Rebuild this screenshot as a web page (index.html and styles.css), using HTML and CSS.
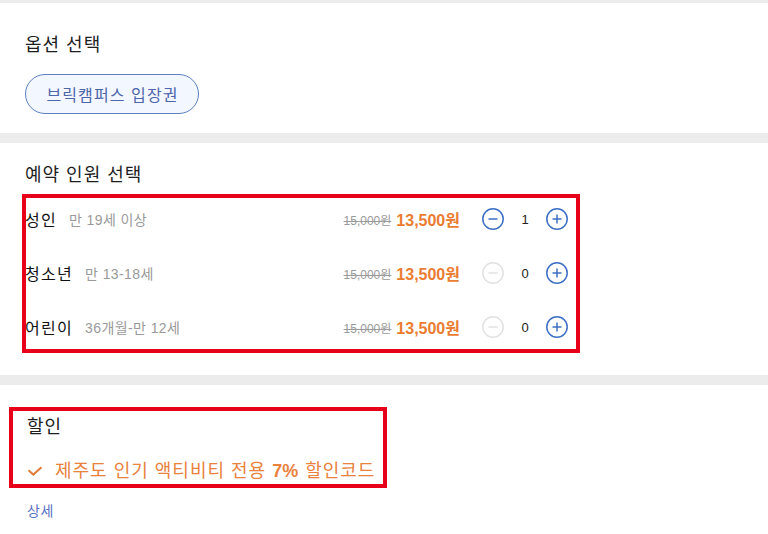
FILE: index.html
```html
<!DOCTYPE html>
<html lang="ko">
<head>
<meta charset="utf-8">
<link rel="stylesheet" href="styles.css">
</head>
<body>
<div class="gap-top"></div>
<section class="section option">
  <h2 class="title">옵션 선택</h2>
  <button class="chip">브릭캠퍼스 입장권</button>
</section>
<div class="divider"></div>
<section class="section people">
  <h2 class="title">예약 인원 선택</h2>
  <div class="rows">
    <div class="row">
      <div class="label"><span class="name">성인</span><span class="desc">만 19세 이상</span></div>
      <div class="price"><s class="old">15,000원</s><strong class="new">13,500원</strong></div>
      <div class="stepper">
        <svg class="btn" viewBox="0 0 22 22"><circle cx="11" cy="11" r="10.2"/><path d="M6.5 11h9"/></svg>
        <span class="count">1</span>
        <svg class="btn" viewBox="0 0 22 22"><circle cx="11" cy="11" r="10.2"/><path d="M6.5 11h9M11 6.5v9"/></svg>
      </div>
    </div>
    <div class="row">
      <div class="label"><span class="name">청소년</span><span class="desc">만 13-18세</span></div>
      <div class="price"><s class="old">15,000원</s><strong class="new">13,500원</strong></div>
      <div class="stepper">
        <svg class="btn disabled" viewBox="0 0 22 22"><circle cx="11" cy="11" r="10.2"/><path d="M6.5 11h9"/></svg>
        <span class="count">0</span>
        <svg class="btn" viewBox="0 0 22 22"><circle cx="11" cy="11" r="10.2"/><path d="M6.5 11h9M11 6.5v9"/></svg>
      </div>
    </div>
    <div class="row">
      <div class="label"><span class="name">어린이</span><span class="desc">36개월-만 12세</span></div>
      <div class="price"><s class="old">15,000원</s><strong class="new">13,500원</strong></div>
      <div class="stepper">
        <svg class="btn disabled" viewBox="0 0 22 22"><circle cx="11" cy="11" r="10.2"/><path d="M6.5 11h9"/></svg>
        <span class="count">0</span>
        <svg class="btn" viewBox="0 0 22 22"><circle cx="11" cy="11" r="10.2"/><path d="M6.5 11h9M11 6.5v9"/></svg>
      </div>
    </div>
  </div>
</section>
<div class="divider"></div>
<section class="section discount">
  <div class="discount-box">
    <h2 class="title">할인</h2>
    <div class="coupon">
      <svg class="check" viewBox="0 0 16 10"><path d="M1.5 4.2l4.8 4.4L14.5 1.2"/></svg>
      <span>제주도 인기 액티비티 전용 <b>7%</b> 할인코드</span>
    </div>
  </div>
  <a class="more">상세</a>
</section>
</body>
</html>
```
FILE: styles.css
```css
* { box-sizing: border-box; }
html, body {
  margin: 0;
  padding: 0;
  background: #fff;
  font-family: "Liberation Sans", "Noto Sans CJK KR", sans-serif;
  color: #222;
}
.gap-top { height: 3px; background: #ececec; }
.divider { height: 10px; background: #ececec; }
.section { padding-left: 25px; }
.title {
  margin: 0;
  font-size: 18px;
  line-height: 26px;
  font-weight: normal;
  letter-spacing: 1px;
  color: #1e1e1e;
}
.option { padding-top: 29px; padding-bottom: 19px; }
.chip {
  display: block;
  margin-top: 16px;
  height: 40px;
  width: 174px;
  border: 1px solid #5d7fbe;
  border-radius: 20px;
  background: #f3f7ff;
  color: #4d65aa;
  font-family: inherit;
  font-size: 16px;
  letter-spacing: 1.1px;
  padding: 0 0 0 1px;
}
.people { padding-top: 19px; padding-bottom: 21px; }
.rows {
  position: relative;
  margin-top: 4px;
  width: 551px;
}
.rows::after {
  content: "";
  position: absolute;
  top: 2px;
  bottom: 1px;
  left: -3px;
  right: -4px;
  border: 4px solid #e8001a;
  pointer-events: none;
}
.row {
  height: 54px;
  display: flex;
  align-items: center;
  padding-right: 8px;
}
.label { flex: 1; display: flex; align-items: center; }
.name { font-size: 16px; color: #111; letter-spacing: 1.3px; }
.desc { font-size: 14px; color: #9a9a9a; margin-left: 12px; letter-spacing: 0.4px; }
.price { display: flex; align-items: center; margin-right: 22px; }
.old { font-size: 12px; color: #9a9a9a; margin-right: 5px; }
.new { font-size: 16px; color: #ea7d31; font-weight: bold; }
.stepper { display: flex; align-items: center; }
.btn { width: 22px; height: 22px; fill: none; stroke: #3c6fc4; stroke-width: 1.5; }
.btn.disabled { stroke: #e2e2e2; }
.count { width: 42px; text-align: center; font-size: 13px; color: #222; }
.discount { padding-top: 26px; padding-left: 13px; padding-bottom: 20px; }
.discount-box {
  width: 370px;
  padding: 3px 0 0 14px;
  outline: 4px solid #e8001a;
}
.coupon {
  margin-top: 18px;
  display: flex;
  align-items: center;
  font-size: 18px;
  line-height: 26px;
  letter-spacing: 1px;
  color: #e8823c;
}
.coupon b { font-weight: bold; letter-spacing: 0; margin-right: 1px; }
.check {
  width: 16px;
  height: 10px;
  margin-right: 12px;
  fill: none;
  stroke: #e07c3a;
  stroke-width: 2;
}
.more {
  display: block;
  margin-top: 17px;
  margin-left: 14px;
  font-size: 14px;
  line-height: 20px;
  letter-spacing: 0.5px;
  color: #5b73c4;
}
```
